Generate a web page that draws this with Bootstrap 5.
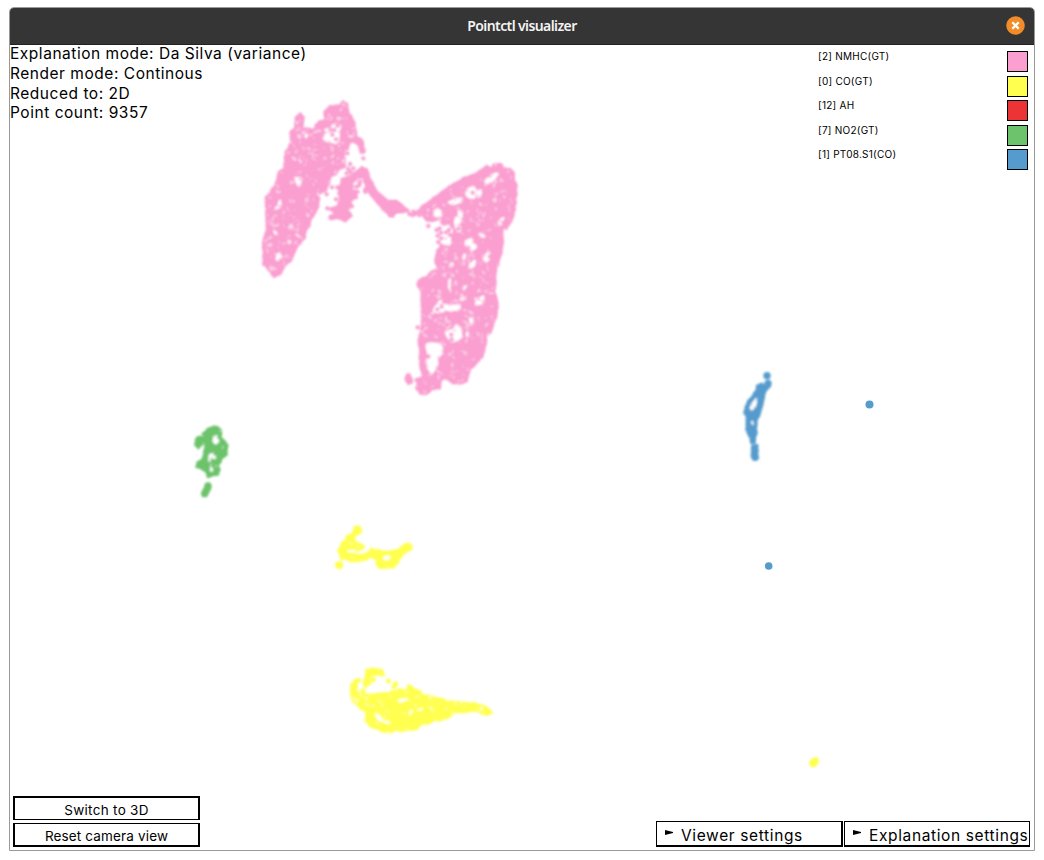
<!DOCTYPE html>
<html lang="en">
<head>
<meta charset="utf-8">
<meta name="viewport" content="width=device-width, initial-scale=1">
<title>Pointctl visualizer</title>
<link href="https://cdn.jsdelivr.net/npm/bootstrap@5.3.0/dist/css/bootstrap.min.css" rel="stylesheet">
<style>
body{font-family:Inter,"Liberation Sans",sans-serif;color:#000;background:#fff;overflow:hidden}
.win{width:1026px;height:844px;margin:7px 0 0 9px;border:1px solid #999;border-radius:5px 5px 0 0;overflow:hidden}
.titlebar{height:37px;background:#353535;border-bottom:1px solid #222;flex:none}
.wtitle{font:600 14px/18px "Noto Sans",sans-serif;color:#f3f3f3;letter-spacing:-.6px}
.closer{right:9px;top:8px;width:19px;height:19px}
.stats{font-size:15.5px;line-height:19.8px;letter-spacing:.53px;top:-1px;left:0}
.legend-box{width:210px;right:6px;top:6px}
.legend-line{height:24.5px;font-size:10px;line-height:11px;letter-spacing:.25px}
.swatch{width:21px;height:21px;border:1px solid #000}
.flatbtn{background:#fff;border:2px solid #000;border-radius:0;padding:0;color:#000}
.cam{width:187px;height:24px;font-size:13.5px;line-height:24px;letter-spacing:.15px}
.cam:first-child{border-bottom-width:1px;letter-spacing:.3px}.cam:last-child{border-top-width:1px}
.fold{height:26px;width:187px;font-size:15.5px;line-height:25px;letter-spacing:.63px;border-width:1px 2px 2px 1px;white-space:nowrap}
.fold:last-child{width:186px;border-right-width:1px}
.fold span{padding-top:3px}
.fold svg{margin:-3px 8px 0 8px;flex:none}
.leftbtns{left:3px;bottom:3px;gap:3px}
.rightbtns{right:4px;bottom:3px;gap:1px}
</style>
</head>
<body>
<main class="win d-flex flex-column">
<header class="titlebar position-relative d-flex align-items-center justify-content-center">
<span class="wtitle">Pointctl visualizer</span>
<svg class="closer position-absolute" viewBox="0 0 19 19"><circle cx="9.5" cy="9.5" r="9.3" fill="#f28c28"/><path d="M6.3 6.3l6.4 6.4M12.7 6.3l-6.4 6.4" stroke="#fff" stroke-width="2.3"/></svg>
</header>
<section class="position-relative flex-grow-1">
<svg id="plot" class="d-block" width="1024" height="805" viewBox="10 45 1024 805">
<defs><filter id="soft" x="-5%" y="-5%" width="110%" height="110%"><feGaussianBlur stdDeviation=".8"/></filter></defs>
</svg>
<div class="stats position-absolute"><div>Explanation mode: Da Silva (variance)</div><div>Render mode: Continous</div><div>Reduced to: 2D</div><div>Point count: 9357</div></div>
<div class="legend-box position-absolute" id="legend"></div>
<div class="leftbtns position-absolute d-flex flex-column"><button class="flatbtn cam">Switch to 3D</button><button class="flatbtn cam">Reset camera view</button></div>
<div class="rightbtns position-absolute d-flex"><button class="flatbtn fold d-flex align-items-center"><svg width="8" height="5" viewBox="0 0 8 5"><path d="M0 0L8 2v1L0 5z"/></svg><span>Viewer settings</span></button><button class="flatbtn fold d-flex align-items-center"><svg width="8" height="5" viewBox="0 0 8 5"><path d="M0 0L8 2v1L0 5z"/></svg><span>Explanation settings</span></button></div>
</section>
</main>
<script src="https://cdn.jsdelivr.net/npm/bootstrap@5.3.0/dist/js/bootstrap.bundle.min.js"></script>
<script>
const PINK='#fa9fd0',YELLOW='#ffff50',GREEN='#6cc36b',BLUE='#569bcd';
document.getElementById('legend').innerHTML=[['[2] NMHC(GT)',PINK],['[0] CO(GT)',YELLOW],['[12] AH','#ec3436'],['[7] NO2(GT)',GREEN],['[1] PT08.S1(CO)',BLUE]]
 .map(([t,c])=>`<div class="legend-line d-flex justify-content-between"><span>${t}</span><span class="swatch" style="background:${c}"></span></div>`).join('');
// Cluster outlines, gaps and stray points; units are thirds of a pixel from the cluster origin.
const clusters=[
{c:PINK,x:250,y:90,tex:190,
 shapes:['152,73 159,82 156,116 172,118 195,124 200,105 212,95 228,93 225,67 240,50 270,48 280,38 290,41 293,65 309,92 319,142 335,150 342,185 334,185 328,165 310,152 296,156 292,175 280,178 282,230 268,235 256,250 240,258 235,282 225,300 205,312 203,340 198,362 181,383 178,402 166,422 162,442 138,473 123,508 103,528 88,551 72,558 64,546 43,523 41,460 52,420 50,322 80,282 87,247 105,237 108,190 124,160 124,127 136,115 138,85',
 '278,268 300,262 315,249 335,235 349,238 359,270 377,302 400,325 418,338 438,336 450,348 450,364 433,366 428,378 415,370 395,352 375,328 355,300 340,260 320,262 302,285 305,302 322,306 312,323 297,333 306,348 288,358 302,378 285,393 262,382 242,385 240,380 252,375 257,365 242,357 262,350 272,330 268,300'],
 holes:['222,137 238,126 247,135 250,118 245,107 262,102 271,112 265,125 268,145 258,160 240,153 222,152','135,262 147,268 153,285 145,288','90,330 92,350 74,358 84,348','120,405 128,408 125,418 118,415','80,497 90,488 90,505 80,512','145,135 151,137 148,143','173,132 168,144 164,138','72,420 82,434 77,436','115,453 123,456 118,460','58,533 66,530 68,536','300,285 312,270 321,276 313,290','222,122 235,115 238,122'],
 dots:'292,190 340,205 300,222 310,235 290,250 295,237 302,246 246,292 230,313 258,328 345,300 346,305 232,355 350,290 330,275 320,290 268,310 262,292 318,322 300,270 205,325 168,410 170,393 253,120 247,134 258,148 262,107 328,285 270,348'},
{c:PINK,x:390,y:150,tex:280,
 shapes:['96,172 130,147 180,111 220,88 265,68 290,51 308,58 314,44 332,43 340,58 360,58 371,68 370,90 379,105 372,180 362,213 348,233 333,229 337,265 336,290 326,330 314,370 315,395 312,430 322,460 317,500 300,545 287,560 285,585 275,620 237,660 229,692 215,698 190,697 165,682 150,690 148,712 125,717 108,731 92,729 81,713 88,687 103,680 93,650 91,590 88,570 98,520 98,470 95,420 83,405 88,393 112,381 127,365 148,358 138,335 143,300 158,291 190,293 187,265 195,240 180,218 160,222 150,205 130,212 113,211 95,190','0,156 20,155 35,168 53,181 45,185 20,184 0,196','50,676 56,675 63,686 64,697 55,701 48,690'],
 holes:['133,182 145,177 157,190 150,202 135,198','230,120 250,110 260,125 275,120 270,140 258,138 245,147 228,135','285,90 300,83 308,73 325,70 318,82 300,98 287,100','175,157 195,149 215,145 215,155 190,163','195,205 205,202 208,180 215,184 215,205 205,225 213,243 190,243 184,230 195,225','168,264 185,262 183,285 165,285','225,275 245,265 248,279 260,290 245,302 240,291 230,290','278,322 282,315 300,310 300,325 288,335','235,350 255,330 255,345 240,355','130,483 142,461 155,450 150,463 180,467 210,466 209,479 165,480 150,488','255,460 265,448 280,438 280,455 265,465','166,546 192,540 197,525 210,530 215,562 190,575 177,568','108,584 120,579 154,584 157,605 145,624 140,650 125,670 112,650 116,617','238,500 250,510 251,520 244,525','329,210 343,203 331,216 336,230 350,237 341,240 326,225','248,492 237,483 244,490','180,342 188,339 188,348 180,350','311,149 317,147 315,154','210,450 221,440 215,453','176,400 180,385 178,420','218,415 230,405 222,418','214,435 225,445 214,440','228,545 238,555 232,562','268,250 285,260 270,260','218,320 226,312 222,330'],
 dots:'58,192 70,185 75,192 88,182 88,195 80,188 68,196 115,228 140,240 149,235 153,248 143,257 154,265 145,276 168,247 180,255 177,240 154,286 188,286 205,236 155,470 142,478 184,554 185,568 215,590 225,540 168,608 170,622 155,634 150,632 158,630 181,627 83,532 98,387 80,690 100,700 110,685 115,620 248,128 335,67 300,320 222,550'},
{c:GREEN,x:180,y:410,tex:4,
 shapes:['70,72 88,56 103,50 118,57 123,70 117,82 133,95 140,105 138,133 126,142 120,154 112,164 116,178 113,192 97,195 85,198 80,184 68,177 52,170 55,158 68,150 75,126 77,108 75,80','49,89 58,84 66,92 62,105 56,113 49,104'],
 holes:['102,76 116,78 120,91 108,104 98,96','86,136 94,129 104,133 108,147 95,144 87,157','92,167 97,171 101,183 91,184'],dots:'64,88 58,88 58,98 84,228 83,234 78,243 74,251'},
{c:YELLOW,x:320,y:515,tex:3,
 shapes:['107,38 117,37 121,48 115,55 108,53 101,63 101,75 108,86 124,91 129,97 113,105 99,99 86,98 72,102 77,120 100,118 124,122 142,118 138,132 118,136 94,136 72,128 65,132 63,119 57,107 65,96 68,84 81,76 83,65 98,58 102,47','154,105 170,107 189,112 210,111 234,107 252,94 262,88 271,94 270,102 251,113 238,127 232,143 220,155 180,157 171,146 179,138 162,128 154,123'],
 holes:['190,125 207,122 212,130 194,136'],dots:'56,150 59,151 149,119 74,115 113,44 265,95 90,68'},
{c:YELLOW,x:340,y:660,tex:45,
 shapes:['36,74 49,73 45,93 60,102 83,107 125,102 155,98 180,91 201,92 220,87 236,93 249,108 273,110 291,118 306,118 322,129 343,126 367,132 406,132 439,144 454,157 447,162 428,159 410,149 374,155 347,154 328,168 299,180 285,176 267,187 242,190 230,205 205,207 184,211 169,206 155,215 132,214 114,205 97,201 79,181 81,152 63,145 53,133 40,120 35,102','81,30 97,27 124,32 130,44 110,41 94,45 86,56 88,69 77,79 72,68 79,55'],
 holes:['105,160 113,160 127,180 153,188 150,192 112,180','174,120 193,115 206,118 191,124 175,128','207,155 220,148 216,157 209,166','232,151 244,144 251,146 240,153'],dots:'47,64 55,61 45,83 69,92 100,59 145,63 167,71 162,80 207,80 213,85 296,177 320,165'},
{c:BLUE,x:730,y:360,tex:0,
 shapes:['83,79 96,71 103,80 111,74 115,64 119,69 117,80 106,91 100,107 97,125 91,146 87,163 78,180 76,204 78,218 72,237 72,248 66,248 61,229 51,209 51,178 53,163 46,155 56,124 70,107 81,92','68,258 80,258 81,292 72,298 68,290'],
 holes:['80,112 63,134 59,148 64,152 75,143 81,124','64,183 71,186 70,197 67,194'],dots:'111,47 114,71 76,292 74,266 51,157 90,84'}
];
let seed=731;const rnd=()=>(seed=(seed*16807)%2147483647)/2147483647;
let out='';
const parse=s=>s.trim().split(' ').map(p=>p.split(',').map(Number));
const inside=(p,q)=>{let r=false;for(let i=0,j=q.length-1;i<q.length;j=i++){const a=q[i],b=q[j];if((a[1]>p[1])!==(b[1]>p[1])&&p[0]<(b[0]-a[0])*(p[1]-a[1])/(b[1]-a[1])+a[0])r=!r}return r};
const dot=(x,y,r,f,o=1)=>`<circle cx="${x.toFixed(1)}" cy="${y.toFixed(1)}" r="${r.toFixed(1)}" fill="${f}" opacity="${o.toFixed(2)}"/>`;
for(const k of clusters){
 let g='';const S=k.shapes.map(parse);
 S.forEach(q=>g+=`<polygon points="${q.join(' ')}" fill="${k.c}" stroke="${k.c}" stroke-width="5" stroke-linejoin="round"/>`);
 k.holes.forEach(h=>g+=`<polygon points="${h}" fill="#fff" stroke="#fff" stroke-width="${k.c===PINK?6:3}" stroke-linejoin="round"/>`);
 // rounded, uneven rims where points overlap
 S.forEach(q=>q.forEach((a,i)=>{const b=q[(i+1)%q.length],n=Math.max(1,Math.round(Math.hypot(b[0]-a[0],b[1]-a[1])/7));for(let t=0;t<n;t++)g+=dot(a[0]+(b[0]-a[0])*t/n+rnd()*2-1,a[1]+(b[1]-a[1])*t/n+rnd()*2-1,4.5+rnd()*2,k.c,1)}));
 k.holes.map(parse).forEach(q=>q.forEach(a=>g+=dot(a[0]+rnd()*4-2,a[1]+rnd()*4-2,2+rnd()*2,k.c,.8)));
 // short pale seams between neighbouring points
 const q=S[0],xs=q.map(p=>p[0]),ys=q.map(p=>p[1]),x0=Math.min(...xs),x1=Math.max(...xs),y0=Math.min(...ys),y1=Math.max(...ys);
 for(let n=0;n<k.tex;){const x=x0+rnd()*(x1-x0),y=y0+rnd()*(y1-y0);if(!inside([x,y],q))continue;n++;const a=rnd()*6.3,l=2+rnd()*9,bx=x+Math.cos(a)*l,by=y+Math.sin(a)*l;g+=`<path d="M${x.toFixed(1)} ${y.toFixed(1)}Q${(x+rnd()*10-5).toFixed(1)} ${(y+rnd()*10-5).toFixed(1)} ${bx.toFixed(1)} ${by.toFixed(1)}" stroke="#fff" stroke-width="${(2+rnd()*2.6).toFixed(1)}" stroke-linecap="round" fill="none" opacity="${(.35+rnd()*.5).toFixed(2)}"/>`}
 parse(k.dots).forEach(p=>g+=dot(p[0],p[1],k.c===PINK?6.5:k.c===YELLOW&&k.x===340?7.5:11,k.c));
 out+=`<g filter="url(#soft)"><g transform="translate(${k.x} ${k.y}) scale(.33333)">${g}</g></g>`;
}
out+=`<circle cx="869.5" cy="404.5" r="4" fill="${BLUE}"/><circle cx="768.7" cy="566" r="3.8" fill="${BLUE}"/><g filter="url(#soft)"><circle cx="813.3" cy="763" r="4.4" fill="${YELLOW}"/><circle cx="815.5" cy="760.5" r="3.5" fill="${YELLOW}"/></g>`;
document.getElementById('plot').innerHTML+=out;
</script>
</body>
</html>
